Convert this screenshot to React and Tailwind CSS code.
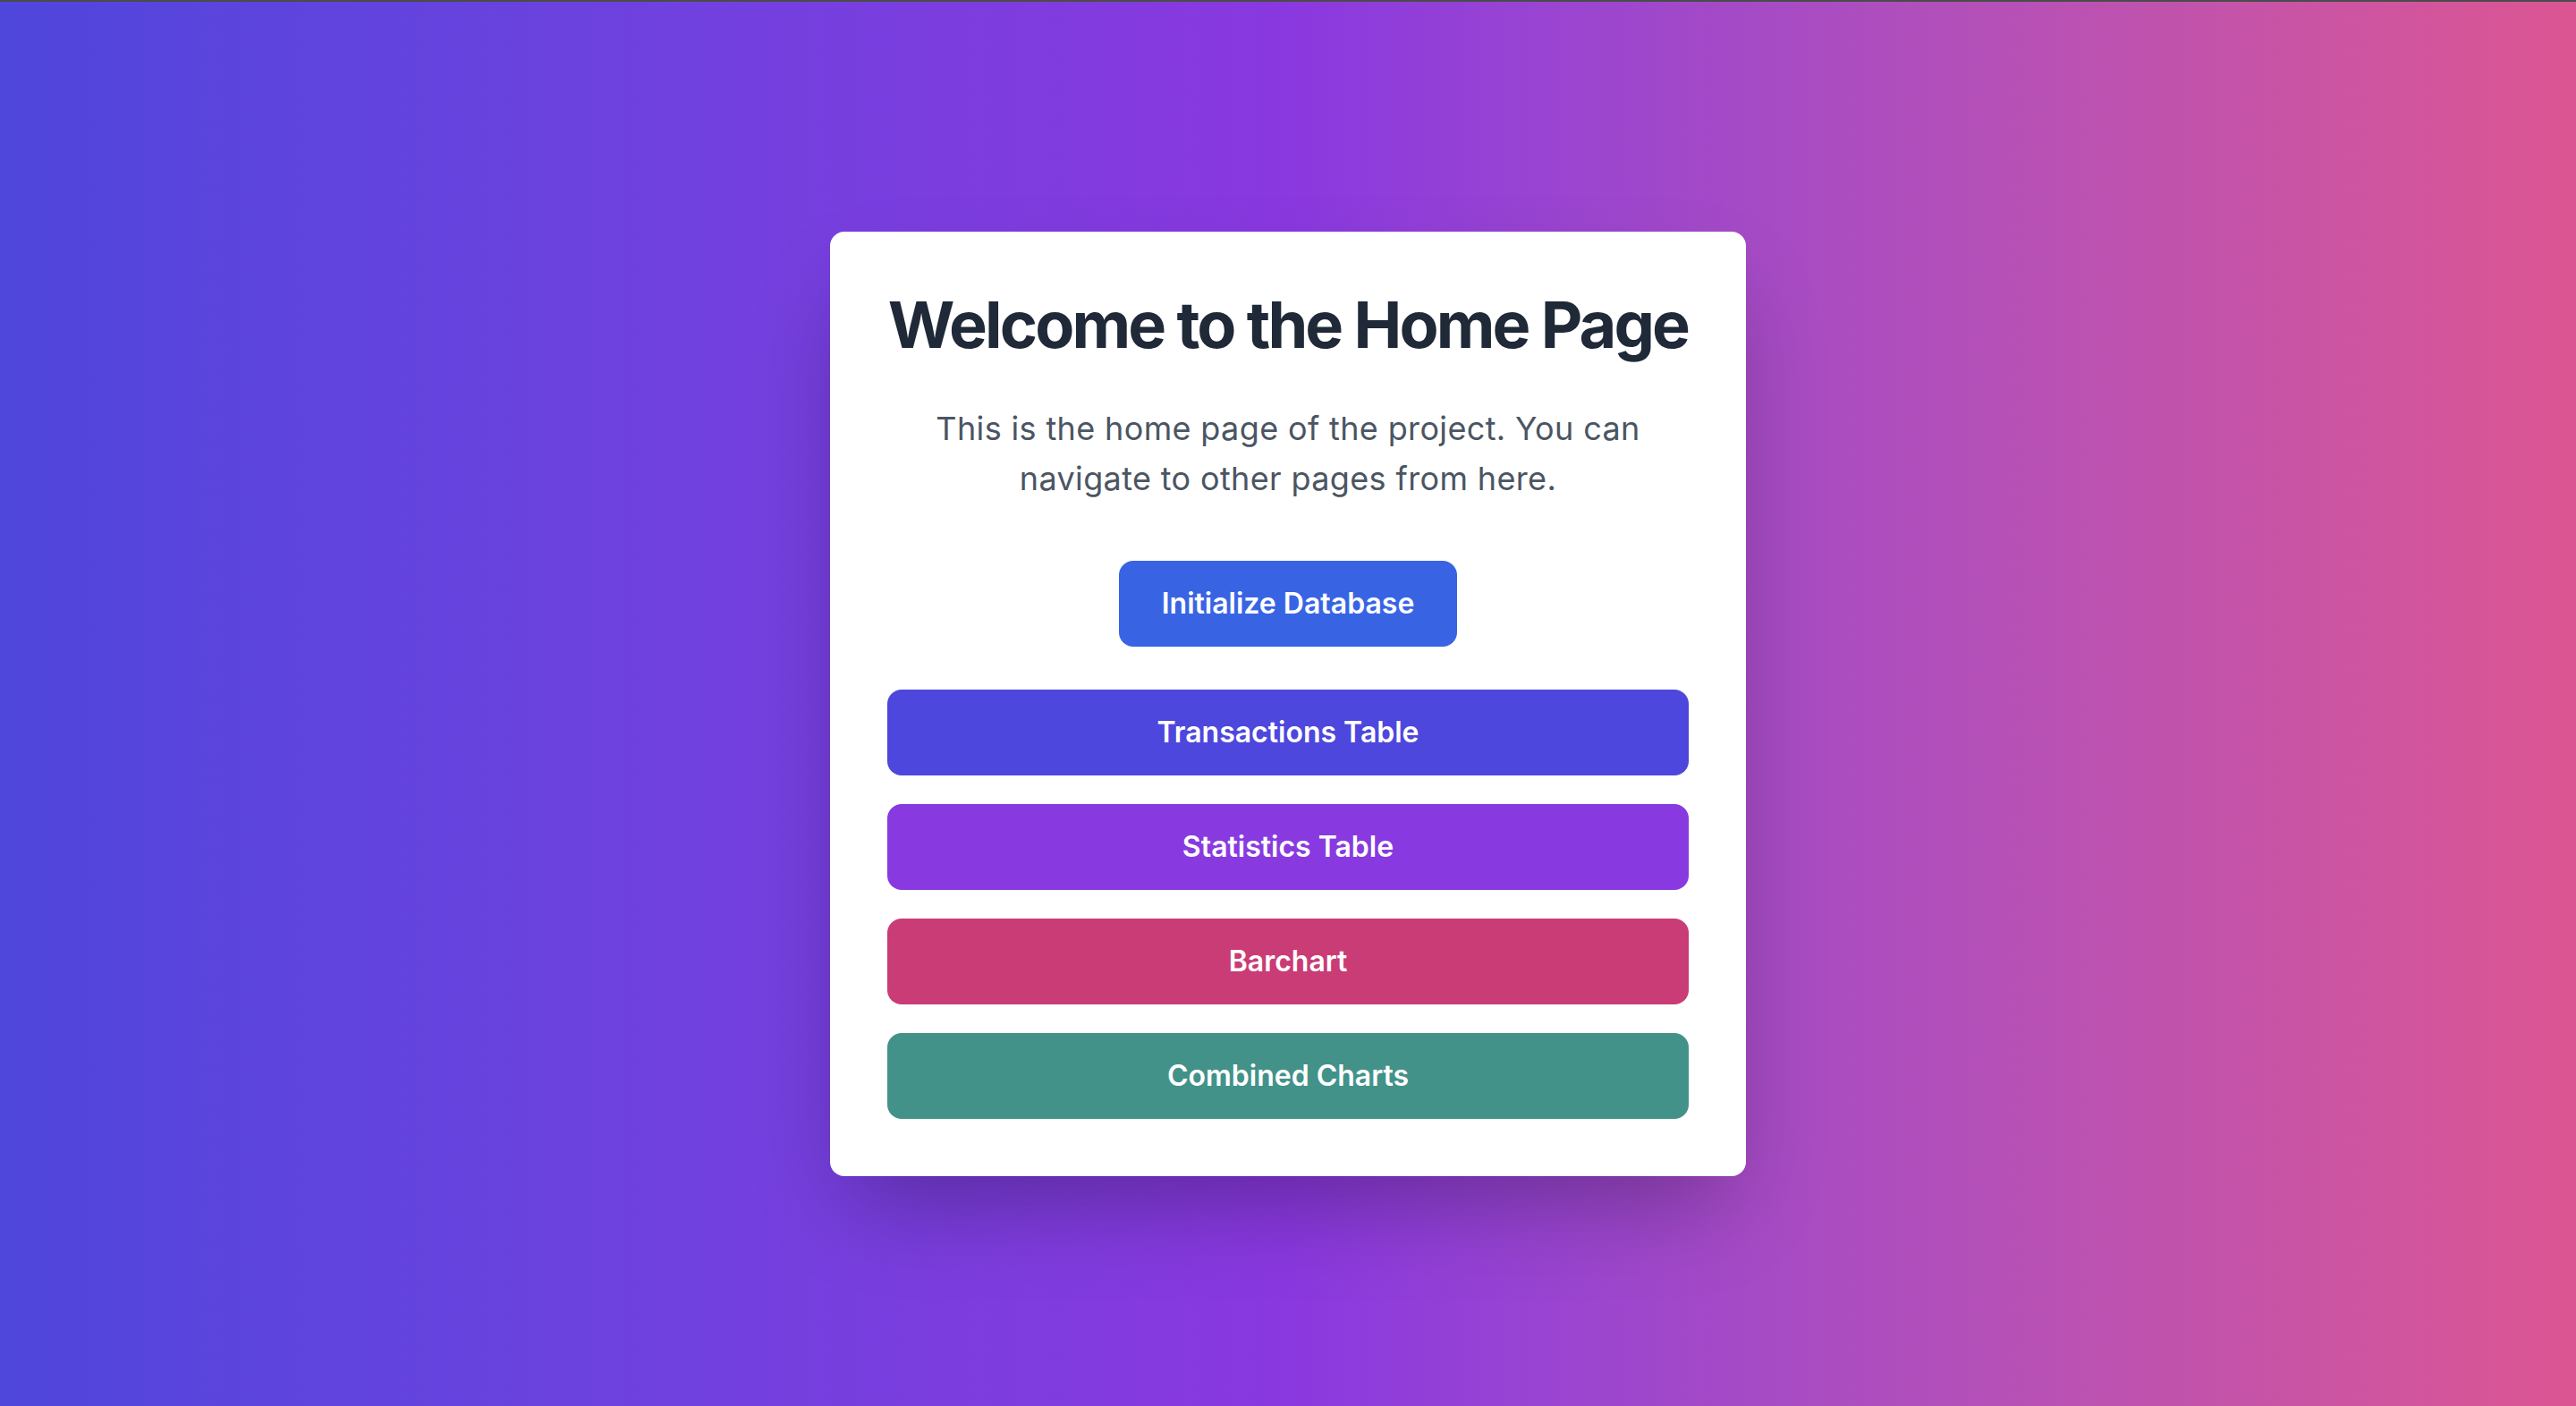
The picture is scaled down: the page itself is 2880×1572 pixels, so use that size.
import React from 'react'

const links = [
    { label: 'Transactions Table', color: 'bg-[#4e47dd]' },
    { label: 'Statistics Table', color: 'bg-[#883ae0]' },
    { label: 'Barchart', color: 'bg-[#c93c75]' },
    { label: 'Combined Charts', color: 'bg-[#43928a]' },
]

export default function App() {
    return (
        <div className="flex min-h-screen flex-col font-['Inter','Liberation_Sans',sans-serif]">
            <div className="h-[2px] bg-[#4b4b4b]" />
            <div className="flex flex-1 items-center justify-center bg-gradient-to-r from-[#4f46dc] via-[#8a38e0] to-[#dc5592]">
                <div className="w-[1024px] rounded-2xl bg-white p-16 text-center shadow-[0_50px_100px_-24px_rgba(0,0,0,0.3)]">
                    <h1 className="mb-12 whitespace-nowrap text-[72px] leading-[80px] font-bold tracking-[-0.04em] text-[#1f2937]">
                        Welcome to the Home Page
                    </h1>
                    <p className="mb-16 text-[36px] leading-[56px] tracking-[0.01em] text-[#4b5563]">
                        This is the home page of the project. You can navigate to other pages from here.
                    </p>
                    <button className="mb-12 rounded-2xl bg-[#3864e4] px-12 py-6 text-[32px] leading-[48px] font-semibold text-white">
                        Initialize Database
                    </button>
                    <div className="flex flex-col gap-8">
                        {links.map(link => (
                            <button
                                key={link.label}
                                className={`w-full rounded-2xl py-6 text-[32px] leading-[48px] font-semibold text-white ${link.color}`}
                            >
                                {link.label}
                            </button>
                        ))}
                    </div>
                </div>
            </div>
        </div>
    )
}
